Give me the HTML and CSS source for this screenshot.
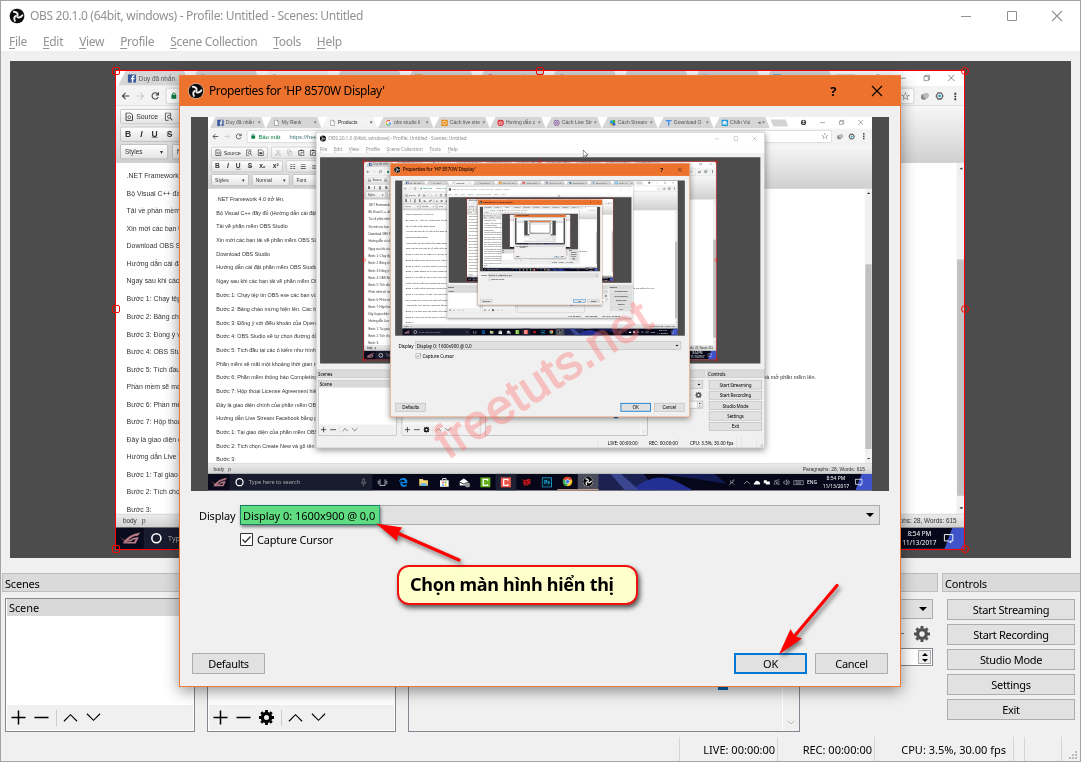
FILE: index.html
```html
<!DOCTYPE html>
<html lang="vi">
<head>
<meta charset="utf-8">
<title>OBS Studio</title>
<link rel="stylesheet" href="styles.css">
</head>
<body>
<svg class="symbols" width="0" height="0">
  <symbol id="obs" viewBox="0 0 16 16"><circle cx="8" cy="8" r="7.800" fill="#ddd"/><circle cx="8" cy="8" r="7.300" fill="#0a0a0c"/><g fill="none" stroke="#eee" stroke-width="1.900" stroke-linecap="round"><path d="M8.600 7.200C8.900 4.800 7.200 4 4.800 3.700"/><path d="M8.600 7.200C8.900 4.800 7.200 4 4.800 3.700" transform="rotate(120 8 8)"/><path d="M8.600 7.200C8.900 4.800 7.200 4 4.800 3.700" transform="rotate(240 8 8)"/></g></symbol>
  <symbol id="close" viewBox="0 0 12 12"><path d="M1 1L11 11M11 1L1 11" fill="none" stroke="currentColor" stroke-width="1.1"/></symbol>
  <symbol id="min" viewBox="0 0 12 12"><path d="M1 6.5H11" stroke="currentColor"/></symbol>
  <symbol id="max" viewBox="0 0 12 12"><path d="M1.5 1.5H10.5V10.5H1.5Z" fill="none" stroke="currentColor"/></symbol>
  <symbol id="restore" viewBox="0 0 12 12"><path d="M1.5 3.5H8.5V10.5H1.5ZM3.5 3V1.5H10.5V8.5H9" fill="none" stroke="currentColor"/></symbol>
  <symbol id="plus" viewBox="0 0 16 16"><path d="M.5 8H15.5M8 .5V15.5" stroke="currentColor" stroke-width="1.6"/></symbol>
  <symbol id="minus" viewBox="0 0 16 16"><path d="M.5 8H15.5" stroke="currentColor" stroke-width="1.6"/></symbol>
  <symbol id="up" viewBox="0 0 16 16"><path d="M1 12L8 5L15 12" fill="none" stroke="currentColor" stroke-width="1.2"/></symbol>
  <symbol id="down" viewBox="0 0 16 16"><path d="M1 4L8 11L15 4" fill="none" stroke="currentColor" stroke-width="1.2"/></symbol>
  <symbol id="gear" viewBox="0 0 16 16"><circle cx="8" cy="8" r="4.4" fill="none" stroke="currentColor" stroke-width="3.4"/><g stroke="currentColor" stroke-width="3"><path d="M8 0V2.6M8 13.4V16M0 8H2.6M13.4 8H16M2.4 2.4L4 4M12 12L13.6 13.6M13.6 2.4L12 4M2.4 13.6L4 12"/></g></symbol>
  <symbol id="caret" viewBox="0 0 8 4"><path d="M0 0H8L4 4Z" fill="currentColor"/></symbol>
  <symbol id="fb" viewBox="0 0 16 16"><rect width="16" height="16" rx="1" fill="#3b5998"/><path d="M10.5 16V9.5H13V7H10.5V5.5Q10.5 4.5 12 4.5H13V2Q8 1 7.8 5.2V7H6V9.5H7.8V16Z" fill="#fff"/></symbol>
  <symbol id="doc" viewBox="0 0 16 16"><path d="M3.500 1.500H9.500L12.500 4.500V14.500H3.500ZM9.500 1.500V4.500H12.500" fill="#fff" stroke="#555"/></symbol>
  <symbol id="goog" viewBox="0 0 16 16"><circle cx="8" cy="8" r="8" fill="#fff"/><g fill="none" stroke-width="2.600"><path d="M3 5.500A5.500 5.500 0 0 1 12 4" stroke="#ea4335"/><path d="M3 5.500A5.500 5.500 0 0 0 3 11" stroke="#fbbc05"/><path d="M3 11A5.500 5.500 0 0 0 11.500 12.500" stroke="#34a853"/><path d="M8 8.500H13Q13 11 11.500 12.500" stroke="#4285f4"/></g></symbol>
  <symbol id="sq" viewBox="0 0 16 16"><rect width="16" height="16" rx="2" fill="#e58a1f"/><circle cx="8" cy="8" r="4" fill="none" stroke="#fff3c0" stroke-width="2"/></symbol>
  <symbol id="redc" viewBox="0 0 16 16"><circle cx="8" cy="8" r="8" fill="#d9363e"/><path d="M3 8Q8 3 13 8M4 11H12" fill="none" stroke="#fff" stroke-width="2"/></symbol>
  <symbol id="at" viewBox="0 0 16 16"><circle cx="8" cy="8" r="6.500" fill="none" stroke="#7d4a9c" stroke-width="2"/><circle cx="8" cy="8" r="2.500" fill="none" stroke="#7d4a9c" stroke-width="2"/></symbol>
  <symbol id="pin" viewBox="0 0 16 16"><circle cx="5" cy="6" r="4" fill="#1ba1e2"/><circle cx="11" cy="5" r="3.500" fill="#3aaa35"/><circle cx="11" cy="11" r="4" fill="#2463c0"/><circle cx="5" cy="12" r="2.500" fill="#f4a000"/></symbol>
  <symbol id="tee" viewBox="0 0 16 16"><path d="M1 1H15V4.500H9.700V15H6.300V4.500H1Z" fill="#3f8ee8"/></symbol>
  <symbol id="mailb" viewBox="0 0 16 16"><rect width="16" height="16" rx="2" fill="#1f9bd8"/><path d="M3 6L8 3L13 6V12H3Z" fill="#fff"/><path d="M4 8L8 10L12 8" fill="none" stroke="#1f9bd8"/></symbol>
  <symbol id="source" viewBox="0 0 16 16"><path d="M2 1H10L14 5V15H2Z" fill="#fff" stroke="#333" stroke-width="1.800"/><circle cx="8" cy="9" r="2.800" fill="none" stroke="#333" stroke-width="1.500"/></symbol>
  <symbol id="find" viewBox="0 0 16 16"><path d="M12 6V1H2V15H8" fill="none" stroke="#444" stroke-width="1.600"/><circle cx="9" cy="8" r="3" fill="none" stroke="#444" stroke-width="1.600"/><path d="M11 10L15 15" stroke="#444" stroke-width="2"/></symbol>
  <symbol id="tmpl" viewBox="0 0 16 16"><path d="M2 1H10L14 5V15H2Z" fill="#fff" stroke="#333" stroke-width="1.800"/><path d="M5 7H11V12H5Z" fill="#333"/></symbol>
  <symbol id="cut" viewBox="0 0 16 16"><path d="M4 1L11 11M12 1L5 11" stroke="#aaa" stroke-width="1.500"/><circle cx="4" cy="13" r="2" fill="none" stroke="#aaa"/><circle cx="12" cy="13" r="2" fill="none" stroke="#aaa"/></symbol>
  <symbol id="copy" viewBox="0 0 16 16"><path d="M2 1H9V10H2ZM6 5H13V15H6Z" fill="#fff" stroke="#aaa" stroke-width="1.500"/></symbol>
  <symbol id="paste" viewBox="0 0 16 16"><path d="M5 3H1.500V14H6M11 3H14V7" fill="none" stroke="#333" stroke-width="1.800"/><path d="M5 1H11V4H5Z" fill="#333"/><path d="M7 8H14V15H7Z" fill="#fff" stroke="#333" stroke-width="1.500"/></symbol>
  <symbol id="rog" viewBox="0 0 44 28"><path d="M2 8Q8 18 16 16L13 20Q6 17 2 8Z" fill="#5b3840"/><path d="M10 21Q20 6 42 3L37 9Q26 9 19 18L23 17Q27 12 36 12H39L33 24H12L16 21H30L33 16L28 17L24 20H17L10 25Z" fill="#b87a84"/></symbol>
</svg>

<div class="stage" id="stage">
  <svg class="arrows" viewBox="0 0 1081 762" width="1081" height="762">
    <g fill="none" stroke="#f00" stroke-width="3.200" stroke-linecap="round"><path d="M395 532L459 560"/><path d="M792 639L837 585.500"/></g>
    <path d="M376 523.500L402 527.500L398 533.500L397 541Z" fill="#f00"/>
    <path d="M779 654.500L790.500 629L794.500 636L802 638.500Z" fill="#f00"/>
  </svg>
  <div class="highlight"></div>
  <div class="callout">Chọn màn hình hiển thị</div>
  <div class="watermark">freetuts.net</div>
</div>

<template id="tpl-window">
  <section class="window">
    <header class="titlebar"><svg class="logo"><use href="#obs"/></svg><span class="title">OBS 20.1.0 (64bit, windows) - Profile: Untitled - Scenes: Untitled</span><span class="winbtns"><svg><use href="#min"/></svg><svg><use href="#max"/></svg><svg><use href="#close"/></svg></span></header>
    <nav class="menubar"><span><u>F</u>ile</span><span><u>E</u>dit</span><span><u>V</u>iew</span><span><u>P</u>rofile</span><span><u>S</u>cene Collection</span><span><u>T</u>ools</span><span><u>H</u>elp</span></nav>
    <div class="preview">
      <div class="source"><div class="fit fit-large" data-slot="preview"></div><div class="selection"><i class="tl"></i><i class="tc"></i><i class="tr round"></i><i class="ml"></i><i class="mr round"></i><i class="bl"></i><i class="br round"></i></div></div>
    </div>
    <div class="docks">
      <div class="dock"><h2>Scenes</h2><div class="list"><div class="row">Scene</div><div class="tools"><svg><use href="#plus"/></svg><svg><use href="#minus"/></svg><b></b><svg><use href="#up"/></svg><svg><use href="#down"/></svg></div></div></div>
      <div class="dock"><h2></h2><div class="list"><div class="tools"><svg><use href="#plus"/></svg><svg><use href="#minus"/></svg><svg><use href="#gear"/></svg><b></b><svg><use href="#up"/></svg><svg><use href="#down"/></svg></div></div></div>
      <div class="dock"><h2></h2><div class="list mixer"><div class="mixbody"><i class="chip"></i><i class="dot"></i></div><div class="mixscroll"><svg><use href="#down"/></svg></div></div></div>
      <div class="dock trans"><h2></h2><div class="combo"><svg class="caret"><use href="#caret"/></svg></div><div class="gearrow"><i></i><svg><use href="#gear"/></svg></div><div class="spin"><span><svg class="flip"><use href="#caret"/></svg><svg><use href="#caret"/></svg></span></div></div>
      <div class="dock controls"><h2>Controls</h2><button>Start Streaming</button><button>Start Recording</button><button>Studio Mode</button><button>Settings</button><button>Exit</button></div>
    </div>
    <footer class="statusbar"><span class="live">LIVE: 00:00:00</span><span class="rec">REC: 00:00:00</span><span class="cpu">CPU: 3.5%, 30.00 fps</span><span class="s1"></span><span class="s2"></span><svg class="grip" viewBox="0 0 9 9"><path d="M6 0h2v2h-2zM3 3h2v2h-2zM6 3h2v2h-2zM0 6h2v2h-2zM3 6h2v2h-2zM6 6h2v2h-2z" fill="#bbb"/></svg></footer>
    <section class="dialog">
      <header class="dlg-title"><svg class="logo"><use href="#obs"/></svg><span>Properties for 'HP 8570W Display'</span><span class="dlg-btns"><em>?</em><svg><use href="#close"/></svg></span></header>
      <div class="dlg-preview"><div class="fit fit-small" data-slot="dialog"></div></div>
      <div class="field"><label>Display</label><div class="combo wide"><span>Display 0: 1600x900 @ 0,0</span><svg class="caret"><use href="#caret"/></svg></div></div>
      <div class="check"><svg viewBox="0 0 13 13"><path d="M.5 .5H12.500V12.500H.5Z" fill="#fff" stroke="#333"/><path d="M2.500 6.500L5.200 9.200L10.500 3.500" fill="none" stroke="#333" stroke-width="1.300"/></svg><span>Capture Cursor</span></div>
      <div class="dlg-foot"><button>Defaults</button><button class="primary">OK</button><button>Cancel</button></div>
    </section>
  </section>
</template>

<template id="tpl-desktop">
  <div class="desktop">
    <div class="tabs">
      <div class="tab"><svg><use href="#fb"/></svg><span>Duy đã nhắn</span><s>×</s></div>
      <div class="tab"><svg><use href="#doc"/></svg><span>My Rank</span><s>×</s></div>
      <div class="tab on"><svg><use href="#doc"/></svg><span>Products</span><s>×</s></div>
      <div class="tab"><svg><use href="#goog"/></svg><span>obs studio li</span><s>×</s></div>
      <div class="tab"><svg><use href="#sq"/></svg><span>Cách live stre</span><s>×</s></div>
      <div class="tab"><svg><use href="#redc"/></svg><span>Hướng dẫn c</span><s>×</s></div>
      <div class="tab"><svg><use href="#at"/></svg><span>Cách Live Str</span><s>×</s></div>
      <div class="tab"><svg><use href="#pin"/></svg><span>Cách Stream</span><s>×</s></div>
      <div class="tab"><svg><use href="#tee"/></svg><span>Download O</span><s>×</s></div>
      <div class="tab"><svg><use href="#mailb"/></svg><span>Chốn Vui</span><s>◂ ×</s></div>
      <div class="newtab"></div>
      <div class="chromebtns"><svg viewBox="0 0 16 16"><circle cx="8" cy="8" r="7.500" fill="#444"/><circle cx="8" cy="5.500" r="2.600" fill="#fff"/><path d="M3 12Q8 7 13 12Z" fill="#fff"/></svg><svg><use href="#min"/></svg><svg><use href="#restore"/></svg><svg><use href="#close"/></svg></div>
    </div>
    <div class="address">
      <svg viewBox="0 0 16 16"><path d="M15 8H2M8 2L2 8L8 14" fill="none" stroke="#444" stroke-width="2"/></svg>
      <svg viewBox="0 0 16 16"><path d="M1 8H14M8 2L14 8L8 14" fill="none" stroke="#ccc" stroke-width="2"/></svg>
      <svg viewBox="0 0 16 16"><path d="M13.500 10A6 6 0 1 1 12.500 4M14 1V6H9" fill="none" stroke="#444" stroke-width="2"/></svg>
      <div class="url"><svg viewBox="0 0 12 14"><rect y="5" width="12" height="9" fill="#0b8043"/><path d="M3 6V3.500A3 3 0 0 1 9 3.500V6" fill="none" stroke="#0b8043" stroke-width="2"/></svg><span>Bảo mật</span><span class="link">https://freetuts.net</span><em>☆</em></div>
      <svg viewBox="0 0 18 16"><circle cx="7" cy="10" r="6" fill="#888"/><circle cx="12" cy="7" r="6" fill="#bbb"/></svg>
      <svg viewBox="0 0 18 16"><path d="M5 0H13L18 8L13 16H5L0 8Z" fill="#666"/><circle cx="9" cy="8" r="5" fill="#fff"/><circle cx="9" cy="8" r="3" fill="#2b9bc4"/></svg>
      <span class="dots">⋮</span>
    </div>
    <div class="editor">
      <div class="ribbon">
        <div class="group"><svg><use href="#source"/></svg><span class="small">Source</span><svg><use href="#find"/></svg><svg><use href="#tmpl"/></svg></div><div class="group"><svg><use href="#cut"/></svg><svg><use href="#copy"/></svg><svg><use href="#paste"/></svg><svg><use href="#paste"/></svg></div>
      </div>
      <div class="ribbon">
        <div class="group fmt"><b>B</b><b><i>I</i></b><b><u>U</u></b><b><del>S</del></b><b>x₂</b><b>x²</b></div><div class="group"><span>☷</span><span>☰</span><span>≡</span></div>
      </div>
      <div class="ribbon">
        <div class="group drop"><span>Styles</span><span>▾</span></div><div class="group drop"><span>Normal</span><span>▾</span></div><div class="group drop"><span>Font</span><span>▾</span></div>
      </div>
    </div>
    <div class="page">
      <div class="article">
        <p>.NET Framework 4.0 trở lên.</p><p>Bộ Visual C++ đầy đủ (Hướng dẫn cài đặt Visual C++)</p><p>Tải về phần mềm OBS Studio</p><p>Xin mời các bạn tải về phần mềm OBS Studio</p><p>Download OBS Studio</p><p>Hướng dẫn cài đặt phần mềm OBS Studio</p><p>Ngay sau khi các bạn tải về phần mềm OBS Studio</p><p>Bước 1: Chạy tệp tin OBS exe các bạn vừa tải về</p><p>Bước 2: Bảng chào mừng hiện lên. Các bạn nhấn Next</p><p>Bước 3: Đồng ý với điều khoản của OpenSource</p><p>Bước 4: OBS Studio sẽ tự chọn đường dẫn</p><p>Bước 5: Tích đầu tại các ô kiểm như hình</p><p>Phần mềm sẽ mất một khoảng thời gian ngắn</p><p class="long"><span>Bước 6: Phần mềm thông báo Completing</span><span>và mở phần mềm lên.</span></p><p>Bước 7: Hộp thoại License Agreement hiện</p><p>Đây là giao diện chính của phần mềm OBS</p><p>Hướng dẫn Live Stream Facebook bằng phần mềm</p><p>Bước 1: Tại giao diện của phần mềm OBS</p><p>Bước 2: Tích chọn Create New và gõ tên</p><p>Bước 3:</p>
      </div>
      <div class="scroll"><svg class="flip"><use href="#caret"/></svg><i></i><svg><use href="#caret"/></svg></div>
    </div>
    <div class="pathbar"><span>body&nbsp;&nbsp; p</span><span>Paragraphs: 28, Words: 615</span></div>
    <div class="taskbar">
      <div class="rog"><svg><use href="#rog"/></svg></div>
      <div class="search"><i></i><span>Type here to search</span><svg viewBox="0 0 16 16"><path d="M6 1H10V9H6ZM3 7Q3 12 8 12T13 7M8 12V16" fill="none" stroke="#aaa"/></svg></div>
      <div class="apps">
        <div><svg viewBox="0 0 24 24"><path d="M6 5V19H18V5M2 8V16M22 8V16" fill="none" stroke="#fff" stroke-width="1.600"/></svg></div>
        <div><svg viewBox="0 0 24 24"><path d="M2 12Q3 2 12 2Q22 2 22 14H9Q10 20 20 17V21Q5 26 5 13Q6 9 10 8Q8 10 9 11H16Q15 6 10 6Q5 7 2 12Z" fill="#0a84e0"/></svg></div>
        <div><svg viewBox="0 0 24 24"><path d="M2 4H10L12 7H22V20H2Z" fill="#f7d774"/><path d="M5 14H19V20H5Z" fill="#5fb3ec"/></svg></div>
        <div><svg viewBox="0 0 24 24"><path d="M2 7H22V22H2Z" fill="#fff"/><path d="M8 7V3H16V7" fill="none" stroke="#fff" stroke-width="2"/><path d="M7 10H11V14H7Z" fill="#e55"/><path d="M13 10H17V14H13Z" fill="#6b3"/><path d="M7 16H11V20H7Z" fill="#39e"/><path d="M13 16H17V20H13Z" fill="#fb0"/></svg></div>
        <div><svg viewBox="0 0 24 24"><path d="M0 10L10 3L20 10V19H0Z" fill="#fff"/><path d="M0 11L10 16L20 11" fill="none" stroke="#111" stroke-width="2"/><circle cx="19" cy="18" r="6" fill="#999"/></svg></div>
        <div><svg viewBox="0 0 24 24"><rect width="24" height="24" fill="#62b01e"/><path d="M17 8V5H7V19H17V16" fill="none" stroke="#fff" stroke-width="3"/></svg></div>
        <div class="dim"><svg viewBox="0 0 24 24"><rect width="24" height="24" fill="#f2564a"/><path d="M17 8V5H7V19H17V16" fill="none" stroke="#fff" stroke-width="3"/></svg></div>
        <div><svg viewBox="0 0 24 24"><path d="M1 4Q8 8 12 5Q17 3 22 5L18 8L23 9L20 13L22 17L17 15L16 20L11 18L6 21L7 16L2 13L7 11Z" fill="#c4161c"/><path d="M8 9L14 11L17 9M9 14L14 15" stroke="#200" stroke-width="1.500" fill="none"/></svg></div>
        <div><svg viewBox="0 0 24 24"><path d="M1 1H23V23H1Z" fill="#061c2c" stroke="#19b5e8" stroke-width="2"/></svg><strong>Ps</strong></div>
        <div class="run"><svg viewBox="0 0 24 24"><circle cx="12" cy="12" r="11" fill="#f2c21a"/><path d="M2 7A11 11 0 0 1 22 7L12 12Z" fill="#e13c2f"/><path d="M2 7A11 11 0 0 0 11 23L13 12Z" fill="#3aa757"/><circle cx="12" cy="12" r="5" fill="#3b7de0" stroke="#fff" stroke-width="1.500"/></svg></div>
        <div class="run lit"><svg><use href="#obs"/></svg></div>
      </div>
      <svg class="art" viewBox="0 0 680 40" preserveAspectRatio="none"><path d="M0 40L20 0H130L160 40Z" fill="#1b2150"/><path d="M100 40Q150 -4 200 14L250 40Z" fill="#232f92"/><path d="M75 0L120 40H85L50 0Z" fill="#3a4690"/><path d="M170 0H300L330 24Q260 12 170 0Z" fill="#121a52"/><path d="M655 0H680V40H640Z" fill="#3e54c8"/></svg>
      <div class="tray"><svg viewBox="0 0 16 16"><path d="M2 15L7 7L13 13M6 3A3 3 0 1 0 9 3M12 5V1" fill="none" stroke="#fff"/></svg><svg><use href="#up"/></svg><svg viewBox="0 0 16 16"><path d="M1 13Q0 8 4 8Q5 2 10 5Q16 6 15 13Z" fill="#fff"/></svg><svg viewBox="0 0 16 16"><path d="M1 3H8V6H15V13H6V10H1Z" fill="#fff"/></svg><svg viewBox="0 0 16 16"><path d="M2 14Q2 3 14 2M6 14Q6 7 14 6M10 14L14 10M2 2L14 14" fill="none" stroke="#fff"/></svg><svg viewBox="0 0 16 16"><path d="M1 6H4L8 2V14L4 10H1ZM10 5Q12 8 10 11M12 3Q16 8 12 13" fill="none" stroke="#fff"/></svg><svg class="kbd" viewBox="0 0 24 16"><path d="M1 4H23V13H1ZM4 7H19M6 10H18" fill="none" stroke="#fff"/></svg><span>ENG</span><span class="clock">8:54 PM<br>11/13/2017</span><svg class="note" viewBox="0 0 20 20"><path d="M2 3H18V15H14V19L10 15H2Z" fill="none" stroke="#fff" stroke-width="1.800"/></svg></div>
    </div>
    <div class="winslot"></div>
    <svg class="cursor" viewBox="0 0 12 19"><path d="M.5 .5V16L4 12.500L6.500 18L9 17L6.500 11.500H11.500Z" fill="#fff" stroke="#000"/></svg>
  </div>
</template>
<script src="script.js"></script>
</body>
</html>
```
FILE: styles.css
```css
* { box-sizing: border-box; }
body { margin: 0; overflow: hidden; font-family: "Noto Sans", sans-serif; }
h2, p { margin: 0; font-weight: normal; }
.symbols { position: absolute; }
.stage { position: relative; width: 1081px; height: 762px; overflow: hidden; }

/* main window */
.window { position: relative; width: 1081px; height: 762px; background: #f0f0f0; color: #000; font: 11px/14px "Noto Sans", sans-serif; letter-spacing: -0.3px; display: flex; flex-direction: column; }
.window::after { content: ""; position: absolute; inset: 0; border: 1px solid #a3a3a3; pointer-events: none; }
.titlebar { height: 31px; background: #fff; color: #929292; display: flex; align-items: center; padding: 0 18px 0 9px; gap: 5px; }
.logo { width: 16px; height: 16px; flex: none; }
.title { font-size: 12px; letter-spacing: -0.32px; white-space: nowrap; }
.winbtns { margin-left: auto; display: flex; gap: 33.500px; }
.winbtns svg { width: 12px; height: 12px; display: block; }
.menubar { height: 20px; background: #fff; color: #939393; display: flex; padding: 4px 9px 0; gap: 16px; font-size: 12px; letter-spacing: -0.32px; line-height: 14px; white-space: nowrap; }
.menubar u { text-underline-offset: 2px; }
.preview { margin: 10px 10px 0; height: 497px; flex: none; background: #4c4c4c; padding: 10px 106px; }
.source { position: relative; width: 849px; height: 478px; }
.fit { overflow: hidden; }
.fit-large { width: 849px; height: 478px; }
.fit-large > .desktop { transform: scale(.531); }
.fit-small { width: 664px; height: 374px; }
.fit-small > .desktop { transform: scale(.415); }
.selection { position: absolute; inset: -1px 0 -1px -1px; border: 1.500px solid #f00; }
.selection i { position: absolute; width: 8px; height: 8px; border: 1px solid #f00; border-radius: 2px; }
.selection .round { border-radius: 50%; }
.tl, .tc, .tr { top: -4px; }
.bl, .br { bottom: -4px; }
.ml, .mr { top: 234px; }
.tl, .ml, .bl { left: -4px; }
.tr, .mr, .br { right: -5px; }
.tc { left: 420px; }

/* docks */
.docks { margin: 15px 1px 0 2px; height: 159px; flex: none; display: grid; grid-template-columns: 196px 195px 398px 129px 138px; column-gap: 6px; }
.dock { display: flex; flex-direction: column; }
.dock h2 { height: 19px; flex: none; margin-bottom: 6px; border: 1px solid #bdbdbd; background: #dadada; font-size: 11px; line-height: 20px; padding-left: 2px; letter-spacing: -0.2px; }
.list { height: 134px; margin: 0 3px; border: 1px solid #828790; background: #fff; display: flex; flex-direction: column; padding: 0 1px 1px; }
.row { height: 17px; background: #d9d9d9; padding-left: 2px; line-height: 18px; letter-spacing: -0.1px; }
.tools { margin-top: auto; height: 25px; background: #f0f0f0; display: flex; align-items: center; gap: 8px; padding-left: 4px; }
.tools svg { width: 15px; height: 15px; }
.tools b { width: 1px; height: 16px; background: #ccc; margin: 0 -2px 0 -1px; }
.mixer { background: #f0f0f0; flex-direction: row; padding: 0; }
.mixbody { flex: 1; display: flex; padding: 80px 14px 0 309px; justify-content: space-between; }
.chip { width: 10px; height: 11px; background: #0063b1; }
.dot { width: 2px; height: 8px; background: #333; }
.mixscroll { width: 17px; border-left: 1px solid #fff; display: flex; align-items: flex-end; justify-content: center; padding-bottom: 4px; }
.mixscroll svg { width: 8px; height: 9px; color: #999; }
.trans { width: 129px; }
.combo { height: 20px; border: 1px solid #adadad; background: #e1e1e1; display: flex; align-items: center; padding: 0 5px 0 2px; }
.caret { width: 8px; height: 4px; margin-left: auto; }
.trans .combo { margin: 1px 5px 0 3px; height: 20px; }
.gearrow { display: flex; height: 29px; align-items: center; justify-content: flex-end; gap: 10px; padding: 0 8px 0 0; color: #505050; }
.gearrow i { width: 9px; height: 1px; background: #777; }
.gearrow svg { width: 16px; height: 16px; }
.spin { margin: 0 5px 0 3px; height: 18px; border: 1px solid #828790; background: #fff; display: flex; justify-content: flex-end; padding: 1px; }
.spin span { width: 13px; border: 1px solid #aaa; background: #eee; display: flex; flex-direction: column; align-items: center; justify-content: space-around; }
.spin svg { width: 6px; height: 3px; }
.flip { transform: scaleY(-1); }
.controls { margin-left: -2px; width: 139px; }
button { font: inherit; letter-spacing: inherit; color: #000; background: #e1e1e1; border: 1px solid #adadad; height: 21px; padding: 0; display: block; border-radius: 0; }
.controls button { margin: 1px 6px 3px 5px; }
.statusbar { margin-top: 5px; height: 25px; display: flex; align-items: stretch; padding: 0 1px 0 679px; line-height: 25px; white-space: nowrap; font-size: 11px; letter-spacing: 0; position: relative; }
.statusbar span { border-left: 1px solid #d5d5d5; text-align: right; padding-right: 2px; }
.live { width: 98px; }
.rec { width: 97px; }
.statusbar .cpu { width: 139px; padding-right: 7px; }
.s1 { width: 11px; }
.s2 { width: 38px; border-right: 1px solid #d5d5d5; }
.grip { width: 9px; height: 9px; margin: 14px 0 0 7px; }

/* properties dialog */
.dialog { position: absolute; left: 179px; top: 75px; width: 722px; height: 612px; border: 1px solid #ed7b3a; background: #f0f0f0; box-shadow: 0 4px 14px rgba(0,0,0,.42); z-index: 2; padding-bottom: 12px; display: flex; flex-direction: column; }
.dlg-title { height: 30px; flex: none; background: #ec722e; display: flex; align-items: center; gap: 5px; padding: 0 17px 0 8px; font-size: 12px; letter-spacing: -0.4px; }
.dlg-btns { margin-left: auto; display: flex; gap: 35px; align-items: center; }
.dlg-btns em { font: bold 13px/14px "Noto Sans", sans-serif; }
.dlg-btns svg { width: 12px; height: 12px; }
.dlg-preview { margin: 11px 11px 0; height: 374px; flex: none; background: #4c4c4c; padding: 0 17px; }
.field { margin: 14px 20px 0 19px; display: flex; align-items: center; height: 20px; flex: none; }
.field label { width: 41px; letter-spacing: -0.15px; padding-top: 1px; }
.wide { flex: 1; }
.wide span { letter-spacing: -0.05px; padding-top: 1px; position: relative; z-index: 7; }
.check { margin: 7px 0 0 60px; height: 15px; display: flex; align-items: center; gap: 4px; }
.check svg { width: 13px; height: 13px; }
.check span { letter-spacing: -0.2px; }
.dlg-foot { margin: auto 12px 0; display: flex; gap: 8px; }
.dlg-foot button { width: 73px; }
.dlg-foot .primary { margin-left: auto; border: 2px solid #0078d7; }

/* captured desktop */
.desktop { position: relative; width: 1600px; height: 900px; transform-origin: 0 0; background: #fff; display: flex; flex-direction: column; font: 13px/16px "Liberation Sans", Arial, sans-serif; letter-spacing: 0; color: #333; overflow: hidden; }
.tabs { height: 28px; flex: none; display: flex; padding-left: 4px; align-items: stretch; }
.tab { width: 135px; background: #d6d6d6; clip-path: polygon(14px 0, 124px 0, 135px 100%, 0 100%); display: flex; align-items: center; padding: 0 12px 0 18px; gap: 5px; font-size: 12px; color: #555; white-space: nowrap; }
.tab.on { background: #f3f3f3; color: #222; }
.tab svg { width: 16px; height: 16px; flex: none; }
.tab span { flex: 1; }
.tab s { text-decoration: none; }
.newtab { width: 36px; height: 17px; margin: 6px 0 0 5px; background: #d3d3d3; transform: skewX(22deg); }
.chromebtns { margin-left: auto; display: flex; gap: 32px; padding: 6px 20px 0 0; color: #555; }
.chromebtns svg { width: 14px; height: 14px; }
.address { height: 38px; flex: none; background: #f3f3f3; border-bottom: 1px solid #ccc; display: flex; align-items: center; gap: 12px; padding: 0 10px 0 10px; }
.address > svg { width: 16px; height: 16px; flex: none; }
.url { flex: 1; height: 30px; background: #fff; border: 1px solid #bbb; border-radius: 3px; display: flex; align-items: center; gap: 8px; padding: 0 6px 0 9px; font-size: 14px; color: #0b8043; white-space: nowrap; }
.url svg { width: 10px; height: 13px; }
.url .link { margin-left: 14px; color: #477; }
.url em { margin-left: auto; font: 21px "DejaVu Sans", sans-serif; color: #333; }
.dots { font: bold 19px "DejaVu Sans", sans-serif; }
.editor { height: 107px; flex: none; background: linear-gradient(#f7f7f7, #cfd1cf); padding: 6px 8px; display: flex; flex-direction: column; gap: 5px; border-bottom: 1px solid #bbb; }
.ribbon { display: flex; gap: 8px; }
.group { height: 28px; border: 1px solid #a6a6a6; border-radius: 3px; background: linear-gradient(#fff, #e4e4e4); display: flex; align-items: center; gap: 12px; padding: 0 8px; font: 16px "DejaVu Sans", sans-serif; color: #333; }
.group svg { width: 16px; height: 16px; }
.small { font: 13px "Liberation Sans", sans-serif; margin-left: -7px; }
.fmt { gap: 17px; font-family: "Liberation Sans", sans-serif; }
.drop { width: 90px; justify-content: space-between; font: 12px "Liberation Sans", sans-serif; }
.page { flex: 1; min-height: 0; display: flex; }
.article { flex: 1; padding: 8px 0 0 20px; overflow: hidden; }
.article p { line-height: 33px; height: 33.080px; white-space: nowrap; }
.article .long { display: flex; width: 1445px; justify-content: space-between; }
.scroll { width: 17px; background: #f1f1f1; padding: 8px 1px; display: flex; flex-direction: column; align-items: center; }
.scroll svg { width: 8px; height: 5px; flex: none; }
.scroll i { width: 15px; height: 445px; margin: 169px 0 auto; background: #c1c1c1; flex: none; }
.pathbar { height: 26px; flex: none; border-top: 1px solid #bbb; background: linear-gradient(#ebebeb, #cfd1cf); display: flex; align-items: center; justify-content: space-between; padding: 0 17px 0 13px; font-size: 12px; }
.taskbar { height: 40px; flex: none; background: #06081a; display: flex; color: #fff; position: relative; }
.taskbar > * { z-index: 1; }
.rog { width: 52px; background: #090b1d; padding: 4px; }
.rog svg { width: 44px; height: 32px; }
.search { width: 344px; background: #191b2e; display: flex; align-items: center; padding: 0 12px 0 14px; gap: 12px; color: #aaa; font: 13.500px "Noto Sans", sans-serif; }
.search i { width: 20px; height: 20px; border: 3px solid #fff; border-radius: 50%; }
.search svg { width: 18px; height: 20px; margin-left: auto; }
.apps { display: flex; }
.apps div { width: 49.500px; display: flex; align-items: center; justify-content: center; position: relative; }
.apps svg { width: 25px; height: 25px; }
.apps strong { position: absolute; font: bold 13px "Noto Sans", sans-serif; color: #19b5e8; }
.apps .dim { background: #1d1f33; }
.apps .run { border-bottom: 3px solid #f5bd9b; }
.apps .lit { background: #4b4c5c; }
.taskbar .art { position: absolute; right: 0; top: 0; width: 680px; height: 40px; z-index: 0; }
.tray { margin-left: auto; display: flex; align-items: center; gap: 7px; padding-right: 22px; font: 12px/18px "Noto Sans", sans-serif; }
.tray svg { width: 17px; height: 17px; }
.tray svg:first-child { margin-right: 12px; }
.tray .kbd { width: 26px; }
.tray .note { width: 20px; height: 20px; }
.clock { text-align: center; width: 76px; }
.winslot { position: absolute; left: 260px; top: 36px; box-shadow: 0 4px 16px rgba(0,0,0,.45); }
.cursor { position: absolute; left: 903px; top: 79px; width: 14px; height: 21px; z-index: 3; }

/* annotations */
.arrows { position: absolute; left: 0; top: 0; z-index: 6; filter: drop-shadow(2px 3px 2px rgba(0,0,0,.5)); }
.highlight { position: absolute; left: 240px; top: 505px; width: 140px; height: 20px; z-index: 5; background: #62e082; border: 1px solid #24a487; box-shadow: 1px 2px 3px rgba(0,0,0,.5); mix-blend-mode: multiply; filter: brightness(1.12); }
.callout { position: absolute; left: 397px; top: 565px; width: 241px; height: 40px; z-index: 5; background: #ffc; border: 2px solid #ef1010; border-radius: 12px; box-shadow: 2px 3px 5px rgba(0,0,0,.65); font: bold 18px/35px "Noto Sans", sans-serif; letter-spacing: -0.28px; padding-left: 11px; white-space: nowrap; }
.watermark { position: absolute; left: 415px; top: 352px; z-index: 5; width: 256px; text-align: center; font: 48px/54px "Liberation Sans", sans-serif; color: #ff6e6e; -webkit-text-stroke: 1.500px #ff6e6e; opacity: .36; transform: rotate(-33deg); letter-spacing: .6px; }
```
FILE: script.js
```js
// The captured display contains the window itself, so nest copies until they are too small to see.
const MAX_DEPTH = 4;
const make = id => document.getElementById(id).content.firstElementChild.cloneNode(true);

function buildWindow(depth) {
  const win = make('tpl-window');
  win.querySelector('[data-slot="preview"]').append(make('tpl-desktop'));
  const desktop = make('tpl-desktop');
  if (depth < MAX_DEPTH) desktop.querySelector('.winslot').append(buildWindow(depth + 1));
  win.querySelector('[data-slot="dialog"]').append(desktop);
  return win;
}

document.getElementById('stage').prepend(buildWindow(0));
```
